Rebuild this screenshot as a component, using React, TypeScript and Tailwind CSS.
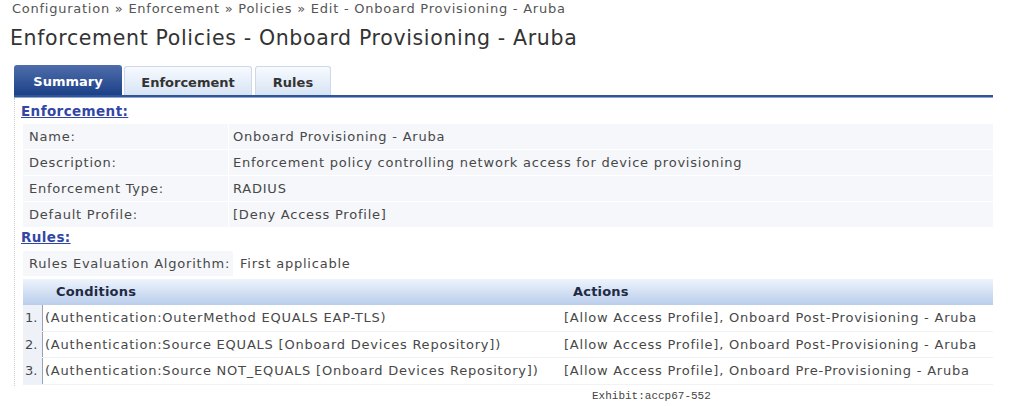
const summaryRows = [
  { label: 'Name:', value: 'Onboard Provisioning - Aruba' },
  { label: 'Description:', value: 'Enforcement policy controlling network access for device provisioning' },
  { label: 'Enforcement Type:', value: 'RADIUS' },
  { label: 'Default Profile:', value: '[Deny Access Profile]' },
]

const rules = [
  {
    condition: '(Authentication:OuterMethod EQUALS EAP-TLS)',
    action: '[Allow Access Profile], Onboard Post-Provisioning - Aruba',
  },
  {
    condition: '(Authentication:Source EQUALS [Onboard Devices Repository])',
    action: '[Allow Access Profile], Onboard Post-Provisioning - Aruba',
  },
  {
    condition: '(Authentication:Source NOT_EQUALS [Onboard Devices Repository])',
    action: '[Allow Access Profile], Onboard Pre-Provisioning - Aruba',
  },
]

export default function App() {
  return (
    <div className="w-[1019px] h-[406px] bg-white overflow-hidden font-[family-name:DejaVu_Sans,Verdana,sans-serif] text-[#484848]">
      {/* Breadcrumb */}
      <div className="pl-[12px] pt-[1px] text-[13px] tracking-[0.75px] leading-[16px] text-[#555]">
        Configuration » Enforcement » Policies » Edit - Onboard Provisioning - Aruba
      </div>

      {/* Title */}
      <h1 className="pl-[10px] mt-[8px] text-[20.5px] tracking-[0.65px] leading-[26px] text-[#333]">
        Enforcement Policies - Onboard Provisioning - Aruba
      </h1>

      {/* Tabs */}
      <div className="ml-[14px] mt-[14px] w-[979px]">
        <div className="flex items-end gap-[2px] h-[30px]">
          <div className="w-[108px] h-[30px] flex items-center justify-center pt-[4px] rounded-t-[3px] bg-gradient-to-b from-[#4f6dab] to-[#1c4188] text-white font-bold text-[13px]">
            Summary
          </div>
          <div className="w-[128px] h-[29px] flex items-center justify-center pt-[3px] rounded-t-[3px] border border-b-0 border-[#cdd8e8] bg-gradient-to-b from-[#f7faff] to-[#d8e4f4] text-[#333] font-bold text-[13px]">
            Enforcement
          </div>
          <div className="w-[76px] h-[29px] ml-[1px] flex items-center justify-center pt-[3px] rounded-t-[3px] border border-b-0 border-[#cdd8e8] bg-gradient-to-b from-[#f7faff] to-[#d8e4f4] text-[#333] font-bold text-[13px]">
            Rules
          </div>
        </div>
        <div className="h-[3px] bg-[#2f5597] border-b border-[#8fa6cf]" />

        {/* Content panel */}
        <div className="border-l border-dotted border-[#ccc] pl-[6px] pb-[1px] text-[13px] tracking-[0.78px]">
          <div className="pt-[6px] pb-[5px] text-[#3346a6] font-bold underline text-[13.5px] tracking-[0.4px] leading-[15px]">
            Enforcement:
          </div>
          <div className="ml-[2px] flex flex-col gap-px">
            {summaryRows.map((r) => (
              <div key={r.label} className="flex h-[25px]">
                <div className="w-[205px] bg-[#f5f7fa] flex items-center pl-[6px]">{r.label}</div>
                <div className="w-px" />
                <div className="flex-1 bg-[#f5f7fa] flex items-center pl-[4px]">{r.value}</div>
              </div>
            ))}
          </div>

          <div className="pt-[3px] pb-[6px] text-[#3346a6] font-bold underline text-[13.5px] tracking-[0.4px] leading-[15px]">
            Rules:
          </div>
          <div className="ml-[2px] flex h-[25px]">
            <div className="w-[210px] bg-[#f5f7fa] flex items-center pl-[6px]">Rules Evaluation Algorithm:</div>
            <div className="w-px" />
            <div className="flex-1 bg-white flex items-center pl-[6px]">First applicable</div>
          </div>

          {/* Rules table */}
          <div className="ml-[2px] mt-[3px]">
            <div className="flex h-[26px] items-center bg-gradient-to-b from-[#eef4fc] to-[#b9cdeb] font-bold text-[#1f2a44] text-[13px] tracking-[0.2px]">
              <div className="w-[541px] pl-[33px]">Conditions</div>
              <div className="flex-1 pl-[9px]">Actions</div>
            </div>
            {rules.map((r, i) => (
              <div key={i} className="flex h-[26.5px] border-b border-[#f0f2f5]">
                <div className="w-[20px] bg-[#eef2f8] border-r border-[#9aa3b3] flex items-center pl-[2px] tracking-normal">
                  {i + 1}.
                </div>
                <div className="w-[521px] flex items-center pl-[2px] whitespace-nowrap">{r.condition}</div>
                <div className="flex-1 flex items-center whitespace-nowrap">{r.action}</div>
              </div>
            ))}
          </div>
        </div>
      </div>

      <div className="pl-[592px] pt-[2px] font-[family-name:Liberation_Mono,monospace] text-[11px] text-[#444]">
        Exhibit:accp67-552
      </div>
    </div>
  )
}
